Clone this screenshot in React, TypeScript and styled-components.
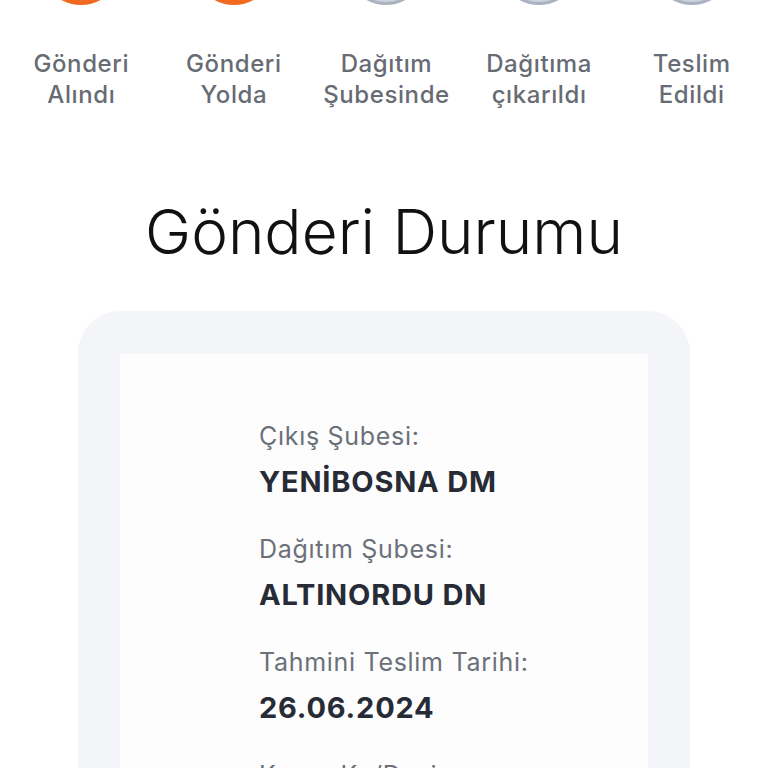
import styled, { createGlobalStyle } from "styled-components";

const GlobalStyle = createGlobalStyle`
	html, body {
		margin: 0;
		padding: 0;
		background: #ffffff;
		overflow: hidden;
	}
	body {
		font-family: Inter, Roboto, "Noto Sans", sans-serif;
	}
`;

const Page = styled.div`
	width: 768px;
	height: 768px;
	overflow: hidden;
	display: flex;
	flex-direction: column;
	align-items: center;
`;

const Steps = styled.div`
	width: 768px;
	box-sizing: border-box;
	padding-left: 5px;
	margin-top: -75px;
	display: grid;
	grid-template-columns: repeat(5, 1fr);
`;

const Step = styled.div`
	display: flex;
	flex-direction: column;
	align-items: center;
`;

const Dot = styled.div<{ $done?: boolean }>`
	width: 80px;
	height: 80px;
	border-radius: 50%;
	box-sizing: border-box;
	background: ${(p) => (p.$done ? "#f26a21" : "#cdd3dc")};
	border: 3px solid ${(p) => (p.$done ? "#f26a21" : "#a9b2bf")};
`;

const StepLabel = styled.div`
	margin-top: 43px;
	font-size: 24px;
	font-weight: 500;
	line-height: 31px;
	letter-spacing: 0.6px;
	color: #676b74;
	text-align: center;
	white-space: pre-line;
`;

const Title = styled.h1`
	margin: 85px 0 0;
	font-size: 62px;
	font-weight: 300;
	line-height: 74px;
	color: #111111;
`;

const Card = styled.div`
	margin-top: 42px;
	width: 612px;
	box-sizing: border-box;
	padding: 43px 42px 0;
	background: #f3f5f8;
	border-radius: 42px 42px 0 0;
	flex: 1;
	display: flex;
`;

const Inner = styled.div`
	flex: 1;
	background: #fdfdfe;
	padding: 67px 0 0 139px;
	display: flex;
	flex-direction: column;
`;

const Field = styled.div`
	display: flex;
	flex-direction: column;
	margin-bottom: 37px;
`;

const Label = styled.div`
	font-size: 25px;
	line-height: 30px;
	font-weight: 400;
	letter-spacing: 0.7px;
	color: #6b7079;
`;

const Value = styled.div`
	margin-top: 16px;
	font-size: 29px;
	line-height: 30px;
	font-weight: 700;
	letter-spacing: 0.8px;
	color: #272b35;
`;

const steps = [
	{ label: "Gönderi\nAlındı", done: true },
	{ label: "Gönderi\nYolda", done: true },
	{ label: "Dağıtım\nŞubesinde", done: false },
	{ label: "Dağıtıma\nçıkarıldı", done: false },
	{ label: "Teslim\nEdildi", done: false },
];

const fields = [
	{ label: "Çıkış Şubesi:", value: "YENİBOSNA DM" },
	{ label: "Dağıtım Şubesi:", value: "ALTINORDU DN" },
	{ label: "Tahmini Teslim Tarihi:", value: "26.06.2024" },
	{ label: "Kargo Kg/Desi:", value: "1" },
];

export default function App(): JSX.Element {
	return (
		<>
			<GlobalStyle />
			<Page>
				<Steps>
					{steps.map((s) => (
						<Step key={s.label}>
							<Dot $done={s.done} />
							<StepLabel>{s.label}</StepLabel>
						</Step>
					))}
				</Steps>
				<Title>Gönderi Durumu</Title>
				<Card>
					<Inner>
						{fields.map((f) => (
							<Field key={f.label}>
								<Label>{f.label}</Label>
								<Value>{f.value}</Value>
							</Field>
						))}
					</Inner>
				</Card>
			</Page>
		</>
	);
}
